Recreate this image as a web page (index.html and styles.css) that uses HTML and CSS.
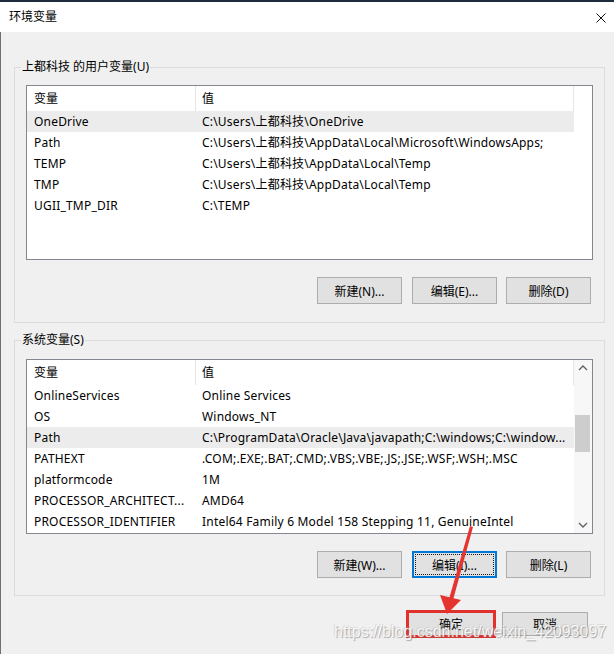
FILE: index.html
```html
<!DOCTYPE html>
<html lang="zh-CN">
<head>
<meta charset="utf-8">
<title>环境变量</title>
<link rel="stylesheet" href="styles.css">
</head>
<body>
<div class="window">
  <div class="titlebar">
    <span class="title">环境变量</span>
    <svg class="close" width="10" height="10" viewBox="0 0 10 10"><path d="M0.5 0.5 L9.5 9.5 M9.5 0.5 L0.5 9.5" stroke="#111" stroke-width="1" fill="none"/></svg>
  </div>
  <div class="body">
    <fieldset class="group">
      <legend>上都科技 的用户变量(U)</legend>
      <div class="list">
        <div class="list-main">
          <div class="row head"><div class="c1">变量</div><div class="c2">值</div></div>
          <div class="row sel"><div class="c1">OneDrive</div><div class="c2">C:\Users\上都科技\OneDrive</div></div>
          <div class="row"><div class="c1">Path</div><div class="c2">C:\Users\上都科技\AppData\Local\Microsoft\WindowsApps;</div></div>
          <div class="row"><div class="c1">TEMP</div><div class="c2">C:\Users\上都科技\AppData\Local\Temp</div></div>
          <div class="row"><div class="c1">TMP</div><div class="c2">C:\Users\上都科技\AppData\Local\Temp</div></div>
          <div class="row"><div class="c1">UGII_TMP_DIR</div><div class="c2">C:\TEMP</div></div>
        </div>
        <div class="scroll-empty"></div>
      </div>
      <div class="btns">
        <button class="btn">新建(N)...</button>
        <button class="btn">编辑(E)...</button>
        <button class="btn">删除(D)</button>
      </div>
    </fieldset>

    <fieldset class="group second">
      <legend>系统变量(S)</legend>
      <div class="list">
        <div class="list-main">
          <div class="row head"><div class="c1">变量</div><div class="c2">值</div></div>
          <div class="row"><div class="c1">OnlineServices</div><div class="c2">Online Services</div></div>
          <div class="row"><div class="c1">OS</div><div class="c2">Windows_NT</div></div>
          <div class="row sel"><div class="c1">Path</div><div class="c2">C:\ProgramData\Oracle\Java\javapath;C:\windows;C:\window...</div></div>
          <div class="row"><div class="c1">PATHEXT</div><div class="c2">.COM;.EXE;.BAT;.CMD;.VBS;.VBE;.JS;.JSE;.WSF;.WSH;.MSC</div></div>
          <div class="row"><div class="c1">platformcode</div><div class="c2">1M</div></div>
          <div class="row"><div class="c1">PROCESSOR_ARCHITECT...</div><div class="c2">AMD64</div></div>
          <div class="row"><div class="c1">PROCESSOR_IDENTIFIER</div><div class="c2">Intel64 Family 6 Model 158 Stepping 11, GenuineIntel</div></div>
        </div>
        <div class="scrollbar">
          <svg class="arr" width="18" height="17" viewBox="0 0 18 17"><path d="M5 10 L9 6 L13 10" stroke="#606060" stroke-width="1.3" fill="none"/></svg>
          <div class="track"><div class="thumb"></div></div>
          <svg class="arr" width="18" height="17" viewBox="0 0 18 17"><path d="M5 7 L9 11 L13 7" stroke="#606060" stroke-width="1.3" fill="none"/></svg>
        </div>
      </div>
      <div class="btns">
        <button class="btn">新建(W)...</button>
        <button class="btn focus">编辑(I)...</button>
        <button class="btn">删除(L)</button>
      </div>
    </fieldset>

    <div class="footer">
      <button class="btn small marked">确定</button>
      <button class="btn small">取消</button>
    </div>
  </div>

  <svg class="arrow" width="614" height="654" viewBox="0 0 614 654">
    <polygon points="470,526 473,527 453,600 449,599" fill="#e5332f"/>
    <polygon points="440,595 461,600 447,614" fill="#e5332f"/>
  </svg>
  <div class="watermark">https://blog.csdn.net/weixin_42093097</div>
</div>
</body>
</html>
```

FILE: styles.css
```css
* { box-sizing: border-box; }

html, body {
  margin: 0;
  padding: 0;
  width: 614px;
  height: 654px;
  overflow: hidden;
  background: #f0f0f0;
}

.window {
  position: relative;
  width: 614px;
  height: 654px;
  font-family: "Noto Sans", "Noto Sans CJK SC", sans-serif;
  font-size: 12px;
  color: #000;
  background: #f0f0f0;
}

.titlebar {
  height: 32px;
  border-top: 2px solid #1d2b3d;
  background: #fff;
  display: flex;
  align-items: center;
  justify-content: space-between;
  padding: 0 8px 0 9px;
}

.title {
  font-size: 12px;
  line-height: 16px;
  color: #000;
}

.close {
  display: block;
  margin-top: 1px;
}

.body {
  height: 622px;
  border-left: 1px solid #707070;
  padding-top: 27px;
}

.group {
  margin: 0 9px 0 13px;
  padding: 10px 11px 18px 11px;
  border: 1px solid #dcdcdc;
  min-width: 0;
}

.group.second {
  margin-top: 9px;
  padding-top: 11px;
  padding-bottom: 17px;
}

.group legend {
  margin-left: -5px;
  padding: 0 1px;
  font-size: 12px;
  line-height: 16px;
  height: 16px;
}

.list {
  height: 175px;
  border: 1px solid #828790;
  background: #fff;
  display: flex;
}

.list-main {
  width: 547px;
  overflow: hidden;
}

.row {
  display: flex;
  height: 21px;
  line-height: 21px;
  white-space: nowrap;
  letter-spacing: 0.2px;
}

.row.head {
  height: 25px;
  line-height: 25px;
  letter-spacing: 0;
}

.row.sel {
  background: #ececec;
}

.c1 {
  width: 169px;
  flex: none;
  padding-left: 7px;
  overflow: hidden;
  border-right: 1px solid transparent;
}

.c2 {
  flex: 1;
  padding-left: 6px;
  overflow: hidden;
  border-right: 1px solid transparent;
}

.row.head .c1,
.row.head .c2 {
  border-right-color: #e5e5e5;
}

.scroll-empty {
  width: 18px;
}

.scrollbar {
  width: 18px;
  display: flex;
  flex-direction: column;
  background: #f7f7f7;
}

.arr {
  display: block;
  flex: none;
}

.track {
  flex: 1;
  padding-top: 38px;
}

.thumb {
  margin: 0 2px 0 1px;
  height: 37px;
  background: #cdcdcd;
}

.btns {
  display: flex;
  justify-content: flex-end;
  gap: 9px;
  margin-top: 17px;
  padding-right: 2px;
}

.btns .btn:first-child {
  margin-right: 1px;
}

.btn {
  width: 85px;
  height: 27px;
  border: 1px solid #adadad;
  background: #e1e1e1;
  font-family: "Noto Sans", "Noto Sans CJK SC", sans-serif;
  font-size: 12px;
  color: #000;
  padding: 0;
  margin: 0;
}

.btn.focus {
  border: 2px solid #0078d7;
  outline: 1px dotted #1a1a1a;
  outline-offset: -4px;
}

.footer {
  display: flex;
  justify-content: flex-end;
  gap: 8px;
  margin-top: 16px;
  padding-right: 26px;
}

.btn.small {
  width: 86px;
  height: 24px;
}

.btn.marked {
  outline: 3px solid #e0312d;
  outline-offset: -1px;
}

.arrow {
  position: absolute;
  left: 0;
  top: 0;
  pointer-events: none;
}

.watermark {
  position: absolute;
  left: 334px;
  top: 623px;
  font-family: "Liberation Sans", sans-serif;
  font-size: 16px;
  color: rgba(255, 255, 255, 0.85);
  text-shadow: 1px 1px 1px rgba(110, 110, 110, 0.55), -1px -1px 0 rgba(180, 180, 180, 0.35);
  white-space: nowrap;
  pointer-events: none;
}
```
